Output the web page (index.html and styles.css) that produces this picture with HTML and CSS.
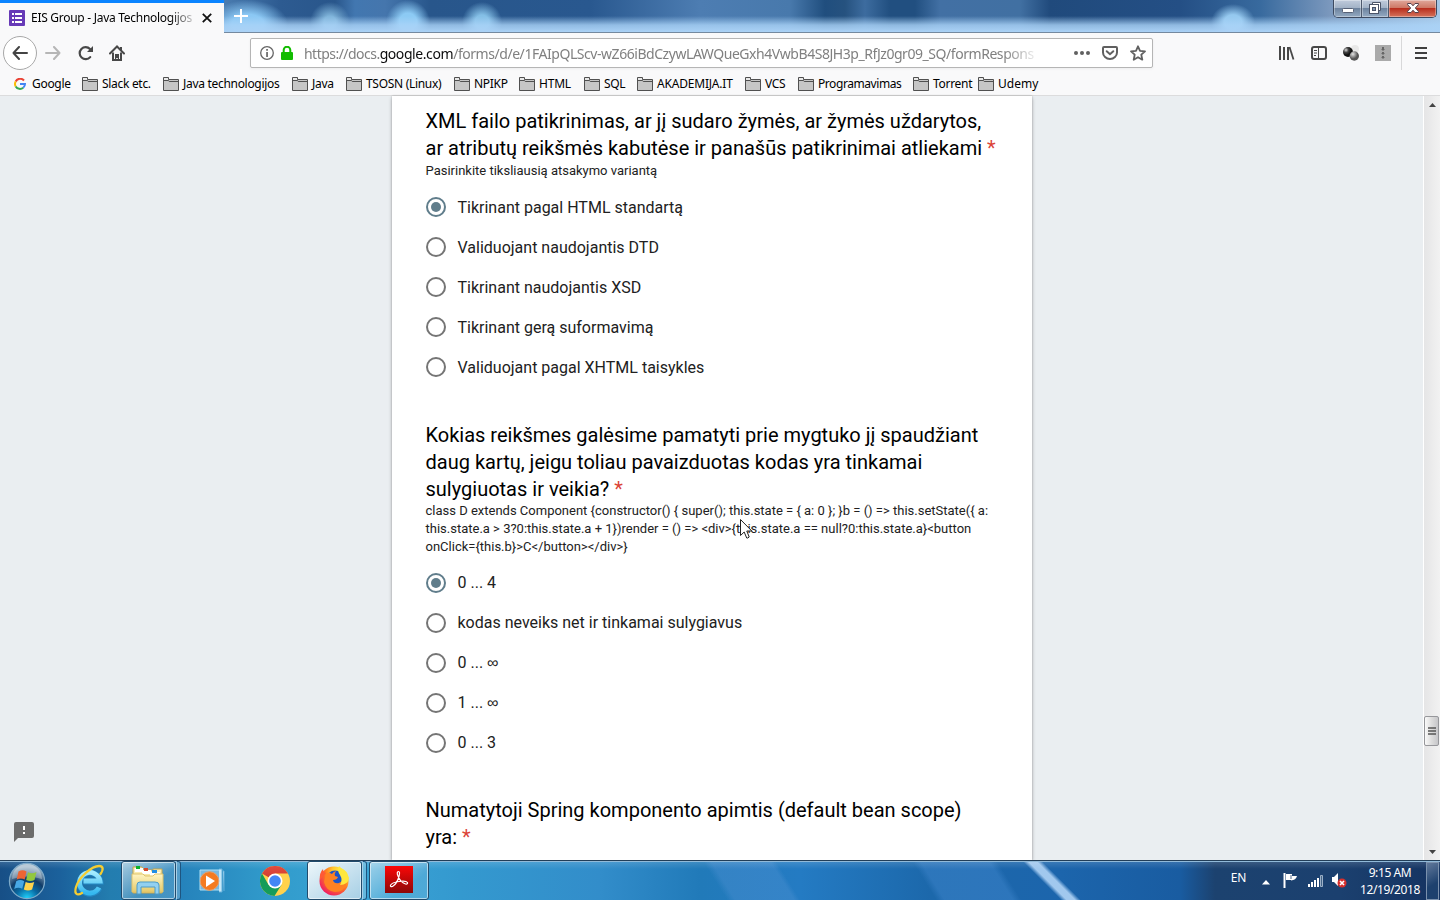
FILE: index.html
```html
<!DOCTYPE html>
<html lang="lt">
<head>
<meta charset="utf-8">
<title>EIS Group - Java Technologijos</title>
<link rel="stylesheet" href="styles.css">
</head>
<body>
<svg width="0" height="0" class="defs"><defs>
<symbol id="folder" viewBox="0 0 16 14"><path d="M.5 13.500V.5H5.500V2.500H15.500V13.500Z" fill="#c6c6c6" stroke="#505050"/><path d="M1 3.500H5.500L6.200 4.500H15" stroke="#505050" fill="none"/><path d="M1 1H5V3H1Z" fill="#e8e8e8"/></symbol>
<linearGradient id="chrome" x2="0" y2="1"><stop stop-color="#e44b3e"/><stop offset="1" stop-color="#c93b2e"/></linearGradient>
<linearGradient id="fold" x2="0" y2="1"><stop stop-color="#fff5c4"/><stop offset="1" stop-color="#e5c968"/></linearGradient>
<radialGradient id="fire" cx=".75" cy=".2" r=".9"><stop stop-color="#fff14c"/><stop offset=".35" stop-color="#ffc72d"/><stop offset=".6" stop-color="#ff7a1f"/><stop offset="1" stop-color="#ee1866"/></radialGradient>
<linearGradient id="red" x2="0" y2="1"><stop stop-color="#fb0707"/><stop offset="1" stop-color="#8c0808"/></linearGradient>
<radialGradient id="orb" cx=".5" cy="1" r=".9"><stop stop-color="#21d6ff"/><stop offset=".35" stop-color="#086aa3"/><stop offset=".62" stop-color="#113c68"/><stop offset="1" stop-color="#9cb5c8"/></radialGradient>
<radialGradient id="dark" cx=".3" cy=".3"><stop stop-color="#ddd"/><stop offset=".5" stop-color="#444"/><stop offset="1" stop-color="#111"/></radialGradient>
<radialGradient id="mid" cx=".35" cy=".3"><stop stop-color="#e5e5e5"/><stop offset="1" stop-color="#555"/></radialGradient>
<linearGradient id="ie" x2="0" y2="1"><stop stop-color="#a5ecff"/><stop offset="1" stop-color="#35b8ef"/></linearGradient>
</defs></svg>
<div class="screen">
<header class="titlebar">
 <div class="tab">
  <svg class="favicon" width="16" height="16"><rect width="16" height="16" rx="1" fill="#673ab7"/><path d="M3 3h2v2H3zM6 3h7v2H6zM3 7h2v2H3zM6 7h7v2H6zM3 11h2v2H3zM6 11h7v2H6z" fill="#fff"/></svg>
  <span class="tab-title">EIS Group - Java Technologijos</span>
  <svg class="tab-close" width="10" height="10"><path d="M.8.8 9.2 9.2M9.2.8.8 9.2" stroke="#111" stroke-width="1.8"/></svg>
 </div>
 <svg class="plus" width="14" height="14"><path d="M7 0v14M0 7h14" stroke="#fff" stroke-width="2"/></svg>
 <div class="win-buttons">
  <div class="win min"><svg width="12" height="5"><rect x=".5" y=".5" width="11" height="4" rx="1" fill="#fff" stroke="#576176"/></svg></div>
  <div class="win max"><svg width="12" height="12"><path d="M3.5 2.5v-2h8v8h-2" fill="#fff" stroke="#4b5468"/><rect x=".5" y="2.5" width="9" height="9" fill="#fff" stroke="#4b5468"/><rect x="3.5" y="5.500" width="3" height="3" fill="#7f96b3" stroke="#4b5468"/></svg></div>
  <div class="win exit"><svg width="12" height="10"><path d="M.6.5H4L6 2.8 8 .5h3.4v1.2L8.3 5l3.1 3.300v1.2H8L6 7.200 4 9.500H.6V8.300L3.700 5 .6 1.700Z" fill="#fff" stroke="#54404b"/></svg></div>
 </div>
</header>
<nav class="navbar">
 <div class="back"><svg width="16" height="14"><path d="M7 1 1.500 7 7 13M1.500 7H15" fill="none" stroke="#444" stroke-width="2" stroke-linecap="round" stroke-linejoin="round"/></svg></div>
 <svg class="forward" width="16" height="14"><path d="M9 1 14.500 7 9 13M14.500 7H1" fill="none" stroke="#b6b6b6" stroke-width="2" stroke-linecap="round" stroke-linejoin="round"/></svg>
 <svg class="reload" width="16" height="16"><path d="M12.200 12.100A6 6 0 1 1 12 4" fill="none" stroke="#484848" stroke-width="2.200" stroke-linecap="round"/><path d="M15 1v6H9Z" fill="#484848"/></svg>
 <svg class="home" width="16" height="16"><path d="M1 8.500 8 1.500 15 8.500" fill="none" stroke="#484848" stroke-width="2" stroke-linecap="round"/><path d="M11 2h2v3h-2z" fill="#484848"/><path d="M4 7.500V15H12V7.500" fill="none" stroke="#484848" stroke-width="2"/><path d="M6 9h4v6H8.800v-2H7.200v2H6Z" fill="#484848"/></svg>
 <div class="urlbar">
  <svg width="14" height="14"><circle cx="7" cy="7" r="6.300" fill="none" stroke="#666" stroke-width="1.300"/><path d="M6.200 3h1.700v1.700H6.200zM6.200 6h1.700v5H6.200z" fill="#666"/></svg>
  <svg class="lock" width="12" height="14"><path d="M2.700 7V4a3.300 3.300 0 0 1 6.600 0v3" fill="none" stroke="#12bc00" stroke-width="2"/><rect y="6" width="12" height="8" rx="1" fill="#12bc00"/></svg>
  <span class="url"><span class="u1">https://docs.</span><b class="u2">google.com</b><span class="u3">/forms/d/e/1FAIpQLScv-wZ66iBdCzywLAWQueGxh4VwbB4S8JH3p_RfJz0gr09_SQ/formRespons</span></span>
  <svg class="dots" width="16" height="4"><circle cx="2" cy="2" r="2"/><circle cx="8" cy="2" r="2"/><circle cx="14" cy="2" r="2"/></svg>
  <svg class="pocket" width="16" height="14"><path d="M2 1h12q1 0 1 1v4.500a7 6.500 0 0 1-14 0V2q0-1 1-1Z" fill="none" stroke="#606060" stroke-width="2"/><path d="m4.700 5.200 3.300 3 3.300-3" fill="none" stroke="#606060" stroke-width="2" stroke-linecap="round"/></svg>
  <svg class="star" width="16" height="16"><path d="m8 1.300 2 4.500 5 .5-3.700 3.400 1 5L8 12.200l-4.300 2.500 1-5L1 6.300l5-.5Z" fill="none" stroke="#606060" stroke-width="1.800" stroke-linejoin="round"/></svg>
 </div>
 <div class="tools">
  <svg width="16" height="14"><path d="M1 0v14M5 1v13M9 1v13" stroke="#484848" stroke-width="2" fill="none"/><path d="M10.500 1l4 12.500" stroke="#484848" stroke-width="1.800"/></svg>
  <svg width="16" height="14"><rect x="1" y="1" width="14" height="12" rx="2" fill="none" stroke="#484848" stroke-width="2"/><path d="M7.500 1v12" stroke="#484848"/><path d="M3 4.500h3M3 7h3M3 9.500h2" stroke="#484848"/></svg>
  <svg width="16" height="16"><circle cx="12" cy="4" r="4" fill="#e8e8e8"/><circle cx="5" cy="7" r="5" fill="url(#dark)"/><circle cx="11.300" cy="11" r="4.700" fill="url(#mid)"/></svg>
  <svg width="16" height="16"><rect width="16" height="16" fill="#aaa"/><path d="M7 2h2v2h1L8 6 6 4h1zM7 7h2v1h1L8 10 6 8h1zM7 11h2v1h1l-2 2-2-2h1z" fill="#666"/></svg>
 </div>
 <div class="menu"><svg width="12" height="12"><path d="M0 1h12M0 6h12M0 11h12" stroke="#404040" stroke-width="2"/></svg></div>
</nav>
<div class="bookmarks">
 <div class="bm google"><svg width="12" height="12" viewBox="0 0 12 12"><path d="M10 2.500A5 5 0 0 0 1.700 3.500" stroke="#ea4335"/><path d="M1.700 3.500A5 5 0 0 0 1.700 8.500" stroke="#fbbc05"/><path d="M1.700 8.500A5 5 0 0 0 9.200 9.700" stroke="#34a853"/><path d="M9.200 9.700A5 5 0 0 0 11 6H6" stroke="#4285f4"/></svg><span>Google</span></div>
 <div class="bm w81"><svg><use href="#folder"/></svg><span>Slack etc.</span></div>
 <div class="bm w129"><svg><use href="#folder"/></svg><span>Java technologijos</span></div>
 <div class="bm w54"><svg><use href="#folder"/></svg><span>Java</span></div>
 <div class="bm w108"><svg><use href="#folder"/></svg><span>TSOSN (Linux)</span></div>
 <div class="bm w65"><svg><use href="#folder"/></svg><span>NPIKP</span></div>
 <div class="bm w65"><svg><use href="#folder"/></svg><span class="loose">HTML</span></div>
 <div class="bm w53"><svg><use href="#folder"/></svg><span>SQL</span></div>
 <div class="bm w108"><svg><use href="#folder"/></svg><span class="loose">AKADEMIJA.IT</span></div>
 <div class="bm w53"><svg><use href="#folder"/></svg><span>VCS</span></div>
 <div class="bm w115"><svg><use href="#folder"/></svg><span class="snug">Programavimas</span></div>
 <div class="bm w65"><svg><use href="#folder"/></svg><span>Torrent</span></div>
 <div class="bm w65"><svg><use href="#folder"/></svg><span class="loose">Udemy</span></div>
</div>
<div class="viewport">
 <svg class="feedback" width="20" height="20"><path d="M2 0h16q2 0 2 2v12q0 2-2 2H4l-4 4V2q0-2 2-2Z" fill="#6b6b6b"/><path d="M9 4h2v4H9zM9 10h2v2H9z" fill="#fff"/></svg>
 <main class="form">
  <section>
   <h2>XML failo patikrinimas, ar jį sudaro žymės, ar žymės uždarytos,<br>ar atributų reikšmės kabutėse ir panašūs patikrinimai atliekami <i>*</i></h2>
   <p>Pasirinkite tiksliausią atsakymo variantą</p>
   <ul>
    <li class="on"><span class="radio"></span>Tikrinant pagal HTML standartą</li>
    <li><span class="radio"></span>Validuojant naudojantis DTD</li>
    <li><span class="radio"></span>Tikrinant naudojantis XSD</li>
    <li><span class="radio"></span>Tikrinant gerą suformavimą</li>
    <li><span class="radio"></span>Validuojant pagal XHTML taisykles</li>
   </ul>
  </section>
  <section class="code-question">
   <h2>Kokias reikšmes galėsime pamatyti prie mygtuko jį spaudžiant<br>daug kartų, jeigu toliau pavaizduotas kodas yra tinkamai<br>sulygiuotas ir veikia? <i>*</i></h2>
   <p>class D extends Component {constructor() { super(); this.state = { a: 0 }; }b = () =&gt; this.setState({ a:<br>this.state.a &gt; 3?0:this.state.a + 1})render = () =&gt; &lt;div&gt;{this.state.a == null?0:this.state.a}&lt;button<br>onClick={this.b}&gt;C&lt;/button&gt;&lt;/div&gt;}</p>
   <ul>
    <li class="on"><span class="radio"></span><span class="label">0 ... 4</span></li>
    <li><span class="radio"></span><span class="label">kodas neveiks net ir tinkamai sulygiavus</span></li>
    <li><span class="radio"></span><span class="label">0 ... <span class="inf">∞</span></span></li>
    <li><span class="radio"></span><span class="label">1 ... <span class="inf">∞</span></span></li>
    <li><span class="radio"></span><span class="label">0 ... 3</span></li>
   </ul>
  </section>
  <section>
   <h2>Numatytoji Spring komponento apimtis (default bean scope)<br>yra: <i>*</i></h2>
  </section>
 </main>
 <div class="scrollbar">
  <svg width="7" height="4"><path d="M0 4 3.500 0 7 4Z" fill="#444"/></svg>
  <div class="thumb"><svg width="8" height="8"><path d="M0 1h8M0 4h8M0 7h8" stroke="#555" stroke-width="1.500"/></svg></div>
  <svg width="7" height="4"><path d="M0 0h7L3.500 4Z" fill="#444"/></svg>
 </div>
</div>
<footer class="taskbar">
 <svg class="start" width="38" height="38" viewBox="0 0 38 38"><circle cx="19" cy="19" r="17.600" fill="url(#orb)" stroke="#7fabc9" stroke-width="1.200"/><path d="M4 17a15 15 0 0 1 30 0q-15-5-30 0Z" fill="#fff" opacity=".3"/><path d="M10.500 9.500q4-2.500 8 0l-1.800 8q-4-2-8 0Z" fill="#ed6534"/><path d="M20 10.300q4 2 8.500-.3l-2 8q-4 2-8.300 0Z" fill="#92c83e"/><path d="M8.200 19.200q4-2.200 8 0l-2 7.500q-4-2-8 .2Z" fill="#48a8e5"/><path d="M17.700 19.900q4 2 8.500 0l-2.100 7.600q-4 2-8.300 0Z" fill="#ffd34c"/></svg>
 <svg class="ie" width="34" height="34" viewBox="0 0 34 34"><path d="M27.500 24A10.500 10.500 0 1 1 28.500 17.500H11.500" fill="none" stroke="#2488c3" stroke-width="5.800"/><path d="M27 23.500A10.300 10.300 0 1 1 28 17H11.500" fill="none" stroke="url(#ie)" stroke-width="4.800"/><path d="M28.500 10C32 5 31 2 27 2 20 2 7 13 4 23c-2 7 1 9 6 6" fill="none" stroke="#f5cd31" stroke-width="2.300" stroke-linecap="round"/></svg>
 <div class="task explorer"><svg width="34" height="32" viewBox="0 0 34 32"><path d="M2 5V2h9l2 3h9V4h9v24H2Z" fill="url(#fold)" stroke="#c3a44c"/><path d="M4 3h8v4H4z" fill="#fff"/><path d="M5 1h4v3H5z" fill="#0ab32b"/><path d="M11 5h9v4h-9z" fill="#fff"/><path d="M13 3h4v3h-4z" fill="#d4482c"/><path d="M19 7h10v4H19z" fill="#fff"/><path d="M21 5h5v3h-5z" fill="#218ee5"/><path d="M1 9h11l2 2h8l2-2h8v18H1Z" fill="url(#fold)" stroke="#dfc46d"/><path d="M6 29v-9q0-3 3-3h15q4 0 4 3v9h-4v-7H10v7Z" fill="#92d0f0" stroke="#4c9bc8"/></svg></div>
 <div class="edge e1"></div>
 <svg class="wmp" width="29" height="26" viewBox="0 0 29 26"><path d="M1 2h20v20H1Z" fill="#77b9e0" stroke="#aee0f6"/><path d="M20 1h3v23h-3M24 3h1v20" fill="#c5e8f8" stroke="#62aeda"/><circle cx="10.500" cy="13" r="9.300" fill="#f47b20" stroke="#e6a06c"/><path d="M7 7.500 16 13l-9 6Z" fill="#fff"/></svg>
 <svg class="chrome" width="30" height="30" viewBox="0 0 30 30"><circle cx="15" cy="15" r="15" fill="#ffd24c"/><path d="M15 15 2 7.500A15 15 0 0 1 28 7.500H15Z" fill="url(#chrome)"/><path d="M2 7.500A15 15 0 0 0 14.500 30L21.500 18.700 15 15 8.500 18.700Z" fill="#159c5a"/><circle cx="15" cy="15" r="7.500" fill="#fff"/><circle cx="15" cy="15" r="5.800" fill="#4286f5"/></svg>
 <div class="task firefox"><svg width="30" height="31" viewBox="0 0 30 31"><circle cx="15" cy="16" r="14.500" fill="url(#fire)"/><path d="M1 15Q0 8 4 4q0 3 3 4Z" fill="#ff5a35"/><circle cx="16" cy="14" r="8.500" fill="#1c55c8"/><path d="M7 8q3-1 6 1 1-2 4-3-2 3-1 5l3 1q-1 3-5 3 1 4 6 3 5-2 5-8l3 8q-3 9-12 9-9-1-11-10Z" fill="#ff8122"/><path d="M20 1q-2 5 1 9 3 5 0 10 8 0 9-7Q28 5 22 3Z" fill="#ffe83c"/></svg></div>
 <div class="edge e2"></div>
 <div class="task pdf"><svg width="28" height="27" viewBox="0 0 28 27"><rect width="28" height="27" fill="url(#red)"/><path d="M12.300 7q0-1.500 1.200-1.500 1.700 0 .6 4.500Q12 18 7.500 20.500 5 21 5.500 19.200 7 16.500 14 15.500q7-1 8.500 1 .3 2-2 1.500Q15 16 13 10q-1-2-.7-3Z" fill="none" stroke="#fff" stroke-width="1.200"/></svg></div>
 <div class="tray">
  <span class="lang">EN</span>
  <svg class="up" width="8" height="5"><path d="M0 4.500 4 0 8 4.500Z" fill="#fff"/></svg>
  <svg class="flag" width="16" height="15"><path d="M1.500 0v15" stroke="#fff" stroke-width="2"/><path d="M3 1h6v2h5q-1 4-6 4.500V7H3Z" fill="#fff"/><path d="M8 2v4" stroke="#506b8c"/></svg>
  <svg class="signal" width="16" height="12"><path d="M1 9h2v3H1zM4 7h2v5H4zM7 5h2v7H7zM10 3h2v9h-2z" fill="#fff"/><path d="M13.500.5h2v11h-2z" fill="#446588" stroke="#9cb0c7"/></svg>
  <svg class="sound" width="16" height="15"><path d="M1 4h2l4-4v13L3 9H1Z" fill="#fff"/><circle cx="11" cy="10" r="4.500" fill="#d62f2d"/><path d="m9 8 4 4M13 8l-4 4" stroke="#fff" stroke-width="1.600"/></svg>
  <div class="clock"><span class="time">9:15 AM</span><span class="date">12/19/2018</span></div>
  <div class="show"></div>
 </div>
</footer>
<svg class="cursor" width="13" height="20"><path d="M.5.500v16l3.700-3.500 2.500 6q1 .5 2.500-1L6.800 12h5Z" fill="#fff" stroke="#222"/></svg>
</div>
</body>
</html>
```
FILE: styles.css
```css
* { box-sizing: border-box; }
body { margin: 0; font-family: "Noto Sans", sans-serif; }
svg { display: block; flex: none; }
.defs { position: absolute; }
.screen { width: 1440px; height: 900px; overflow: hidden; display: flex; flex-direction: column; position: relative; }

.titlebar { height: 33px; flex: none; display: flex; align-items: flex-start; border-bottom: 1px solid #74899f;
  background:
    linear-gradient(180deg, transparent 16px, rgba(171,212,248,.8) 25px, #abd2f6 32px),
    radial-gradient(ellipse 40px 24px at 248px 24px, #8bc8f4 40%, transparent),
    radial-gradient(ellipse 20px 20px at 330px 22px, #7fb4da 30%, transparent),
    radial-gradient(ellipse 22px 22px at 408px 22px, #8ccaf4 40%, transparent),
    radial-gradient(ellipse 20px 20px at 482px 22px, #84bfe6 35%, transparent),
    radial-gradient(ellipse 22px 18px at 1233px 22px, #95c9ef 40%, transparent),
    linear-gradient(90deg, #4c7eb2 220px, #2d5b91 280px, #29568b 335px, #4277b0 355px, #4576ad 385px, #28568b 430px, #29588f 590px, #4d7db2 700px, #4879ac 790px, #204e7e 825px, #26527f 845px, #3d6c9f 865px, #214f80 890px, #214f80 915px, #4270a4 940px, #4170a2 1020px, #204a7c 1050px, #244f85 1180px, #386a9e 1260px, #7b98bd 1330px, #a5c7e7 1440px); }
.tab { width: 224px; height: 33px; background: #f9f9fa; border-top: 3px solid #0a84ff; display: flex; align-items: center; padding-left: 9px; flex: none; }
.tab-title { font-size: 12px; letter-spacing: -.28px; width: 163px; margin: -2px 0 0 6px; white-space: nowrap; overflow: hidden; -webkit-mask-image: linear-gradient(90deg, #000 138px, transparent 168px); }
.tab-close { margin-left: 8px; }
.plus { margin: 9px 0 0 10px; }
.win-buttons { display: flex; width: 104px; height: 18px; margin: 0 3px 0 auto; border: 1px solid #3d4a60; border-top: 0; border-radius: 0 0 5px 5px; overflow: hidden; }
.win { display: flex; align-items: center; justify-content: center; background: linear-gradient(#c0cbdc, #a3b3c7 45%, #6d839f 50%, #94aac2); border-right: 1px solid #4d596d; box-shadow: inset 0 0 0 1px rgba(255,255,255,.35); }
.min { width: 28px; padding-top: 4px; }
.max { width: 27px; padding-bottom: 2px; }
.exit { flex: 1; padding-bottom: 2px; border: 0; background: linear-gradient(#e1a89b, #ce7966 45%, #b92f1e 50%, #d5745d); }

.navbar { height: 40px; flex: none; background: #f9f9fa; display: flex; align-items: center; padding-left: 3px; }
.back { width: 34px; height: 34px; border: 1px solid #a8a8a8; border-radius: 50%; background: #fff; display: flex; align-items: center; justify-content: center; }
.forward { margin-left: 8px; }
.reload { margin-left: 17px; }
.home { margin-left: 15px; }
.urlbar { width: 903px; height: 30px; margin-left: 125px; border: 1px solid #b5b5b5; border-radius: 2px; background: #fff; display: flex; align-items: center; padding-left: 9px; box-shadow: 0 1px 3px rgba(0,0,0,.05); }
.lock { margin-left: 7px; }
.url { width: 736px; margin-left: 11px; white-space: nowrap; font-size: 14px; line-height: 22px; color: #808080; padding-top: 2px; -webkit-mask-image: linear-gradient(90deg, #000 700px, transparent 736px); }
.url b { color: #0c0c0d; font-weight: 400; }
.u1 { letter-spacing: -.53px; }
.u2 { letter-spacing: -.42px; }
.u3 { letter-spacing: -.45px; }
.dots { margin-left: 34px; fill: #606060; }
.pocket { margin-left: 12px; }
.star { margin-left: 12px; }
.tools { display: flex; gap: 16px; align-items: center; margin-left: 126px; }
.menu { height: 34px; margin-left: 10px; padding-left: 13px; border-left: 1px solid #d8d8d9; display: flex; align-items: center; }

.bookmarks { height: 23px; flex: none; background: #f9f9fa; border-bottom: 1px solid #dcdcdd; display: flex; align-items: flex-start; font-size: 12px; line-height: 21px; letter-spacing: -.3px; padding-left: 14px; color: #000; }
.bm { display: flex; align-items: center; gap: 4px; white-space: nowrap; flex: none; height: 21px; }
.bm svg { width: 16px; height: 14px; }
.google { width: 68px; gap: 6px; }
.google svg { width: 12px; height: 12px; fill: none; stroke-width: 2; }
.w53 { width: 53px; } .w54 { width: 54px; } .w65 { width: 65px; } .w81 { width: 81px; }
.w108 { width: 108px; } .w115 { width: 115px; } .w129 { width: 129px; }
.loose { letter-spacing: -.2px; }
.snug { letter-spacing: -.43px; }
.bm:last-child .loose { letter-spacing: 0; }

.viewport { height: 764px; flex: none; background: #eaeef1; display: flex; align-items: stretch; }
.feedback { align-self: flex-end; margin: 0 358px 18px 14px; }
.form { width: 640px; background: #fff; box-shadow: 0 0 2px rgba(0,0,0,.22), 0 2px 4px rgba(0,0,0,.24); padding: 12px 0 0 33.500px; font-family: Roboto, sans-serif; overflow: hidden; }
.form section { margin-bottom: 34px; white-space: nowrap; }
.form h2 { margin: 0; font-size: 20px; line-height: 27px; font-weight: 400; color: #000; }
.form .code-question h2 { padding-top: 1px; margin-bottom: -1px; }
.form i { color: #db4437; font-style: normal; }
.form p { margin: 0; font-size: 13px; line-height: 18px; color: #212121; }
.form ul { list-style: none; padding: 0; margin: 7px 0 0; }
.form li { height: 40px; display: flex; align-items: center; font-size: 16px; color: #212121; }
.label { padding-bottom: 2px; }
.radio { width: 20px; height: 20px; border: 2px solid #757575; border-radius: 50%; margin-right: 12px; display: flex; align-items: center; justify-content: center; }
.on .radio { border-color: #607d8b; }
.on .radio::after { content: ""; width: 10px; height: 10px; border-radius: 50%; background: #607d8b; }
.inf { font-family: "Liberation Sans", sans-serif; }
.scrollbar { width: 17px; margin-left: auto; border-left: 1px solid #fff; background: linear-gradient(90deg, #e5e5e6, #f2f2f2); display: flex; flex-direction: column; align-items: center; padding: 7px 0 6px; }
.thumb { width: 15px; height: 30px; margin: 609px 1px auto 0; border: 1px solid #96979b; border-radius: 2px; background: linear-gradient(90deg, #fafafa, #ddd 50%, #c6c6c9); display: flex; align-items: center; justify-content: center; }

.taskbar { height: 40px; flex: none; border-top: 1px solid #223e58; box-shadow: inset 0 1px #91bad9; display: flex; align-items: center; padding-left: 8px;
  background:
    linear-gradient(180deg, rgba(255,255,255,.15), transparent 8px),
    linear-gradient(45deg, transparent calc(50% - 7px), #a1c8ee calc(50% - 3px), #a1c8ee calc(50% + 3px), transparent calc(50% + 7px)) 1022px 0 / 60px 40px no-repeat,
    linear-gradient(58deg, transparent calc(50% - 32px), rgba(67,139,205,.55) calc(50% - 25px), rgba(67,139,205,.55) calc(50% + 25px), transparent calc(50% + 30px)) 698px 0 / 110px 40px no-repeat,
    linear-gradient(58deg, transparent calc(50% - 36px), rgba(54,126,196,.65) calc(50% - 29px), rgba(54,126,196,.65) calc(50% + 29px), transparent calc(50% + 36px)) 900px 0 / 134px 40px no-repeat,
    linear-gradient(90deg, #174f86, #1b619c 60px, #237daf 110px, #2582bb 180px, #319bcb 270px, #3aa4d5 360px, #3499cf 460px, #328dca 600px, #217ab9 700px, #247bc3 800px, #1c68ab 930px, #1c65ac 1060px, #195ca1 1180px, #1c426f 1215px, #1b406f 1340px, #153462 1430px); }
.ie { margin-left: 26px; }
.task { height: 39px; border: 1px solid #214b6c; border-radius: 3px; box-shadow: inset 0 0 0 1px rgba(255,255,255,.55); display: flex; align-items: center; justify-content: center; background: linear-gradient(145deg, rgba(255,255,255,.6), rgba(255,255,255,.15) 60%); }
.explorer { width: 55px; margin-left: 15px; }
.explorer svg { margin-right: 2px; }
.edge { width: 5px; height: 39px; border: 1px solid #1e5580; border-left-color: #a6d0e8; border-radius: 0 3px 3px 0; background: rgba(255,255,255,.22); }
.wmp { margin-left: 18px; }
.chrome { margin-left: 32px; }
.firefox { width: 55px; margin-left: 17px; background: linear-gradient(145deg, #edf6fa, #a6cfe5); }
.firefox svg { margin-right: 1px; }
.pdf { width: 60px; margin-left: 2px; background: linear-gradient(145deg, rgba(255,255,255,.5), rgba(255,255,255,.12) 65%); }
.pdf svg { margin-bottom: 3px; }
.tray { display: flex; align-items: center; margin-left: auto; height: 39px; color: #fff; font-size: 12px; }
.lang { letter-spacing: -.3px; margin-bottom: 6px; }
.up { margin: 3px 0 0 16px; }
.flag { margin-left: 13px; }
.signal { margin-left: 8px; }
.sound { margin-left: 8px; }
.clock { width: 70px; margin-left: 8px; text-align: center; line-height: 17px; letter-spacing: -.4px; display: flex; flex-direction: column; white-space: nowrap; padding-top: 1px; }
.show { width: 13px; height: 38px; margin: 0 1px 0 1px; border: 1px solid #7a91ad; background: linear-gradient(150deg, #60789a, #1d416e 60%); }
.cursor { position: absolute; left: 740px; top: 519px; }
```
